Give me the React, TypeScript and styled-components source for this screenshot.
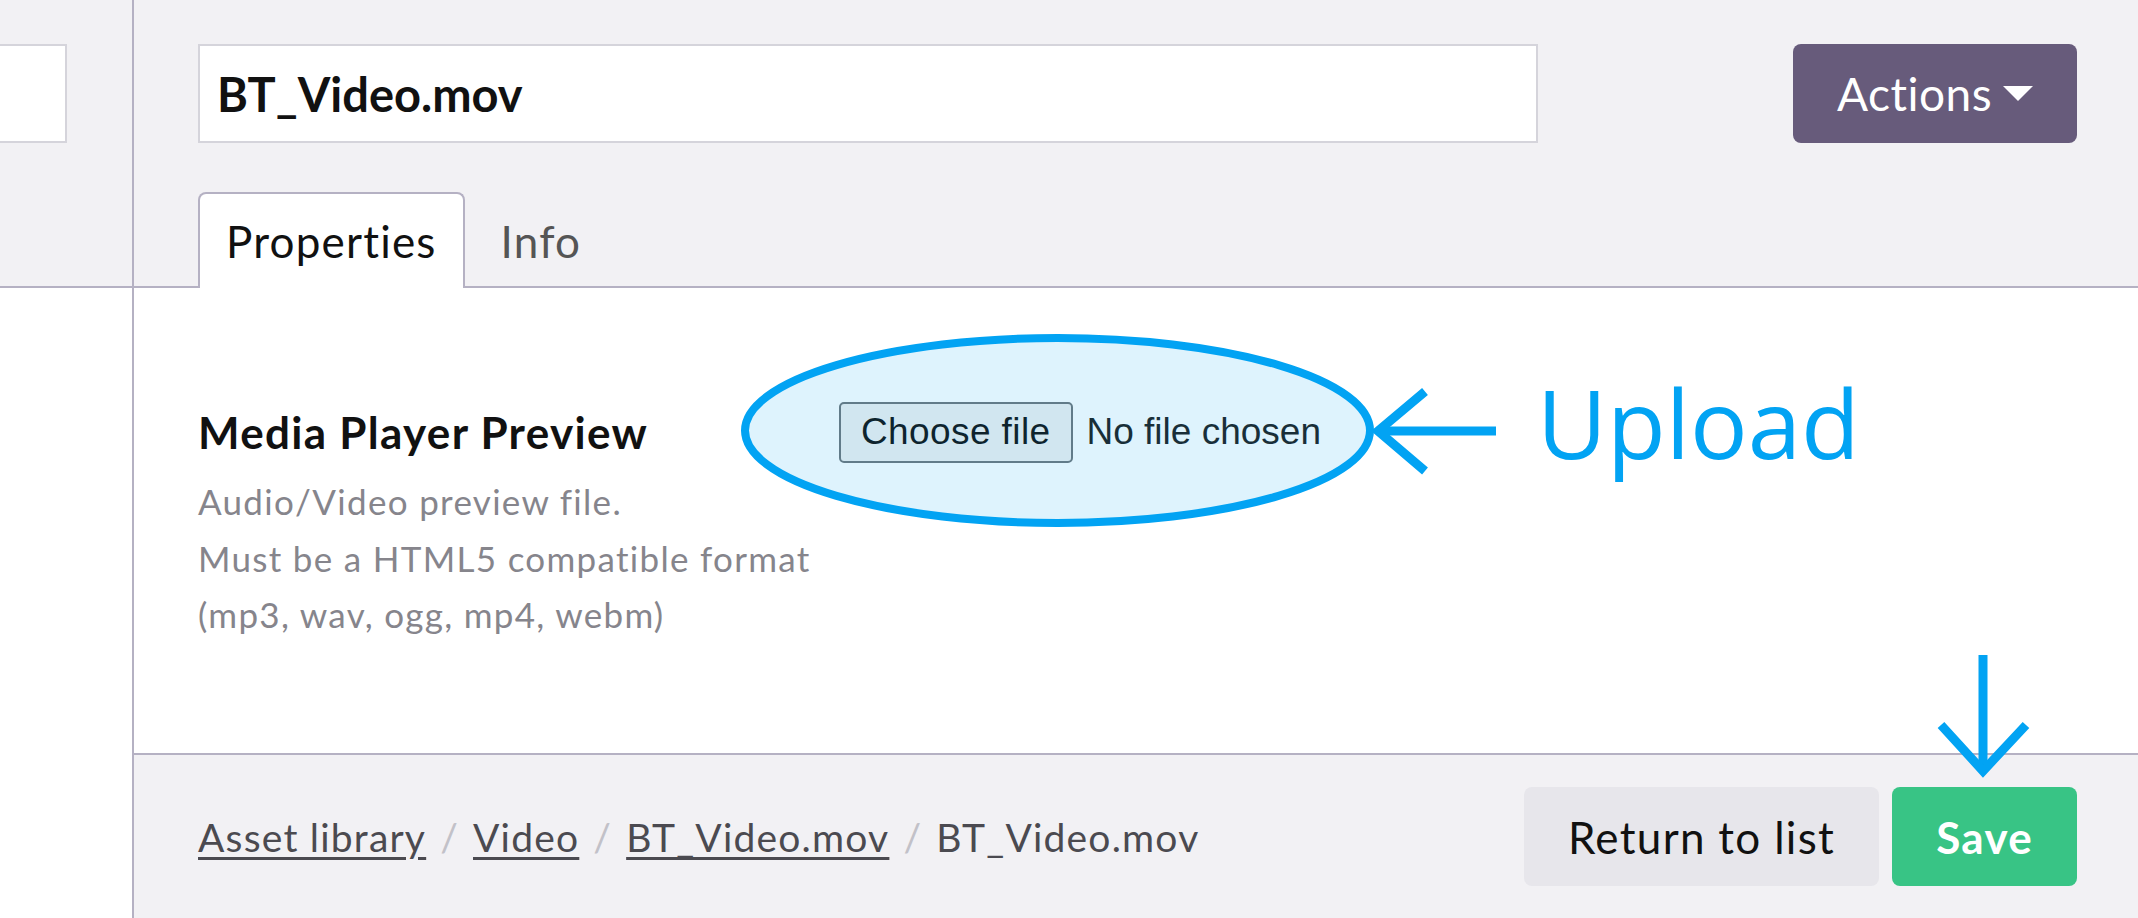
import React from 'react'
import styled, { createGlobalStyle } from 'styled-components'

const GlobalStyle = createGlobalStyle`
  html, body {
    margin: 0;
    padding: 0;
  }
  body {
    background: #f2f1f4;
    font-family: Lato, "Noto Sans", sans-serif;
    color: #111;
  }
  * {
    box-sizing: border-box;
  }
`

const Page = styled.div`
  display: grid;
  grid-template-columns: 134px 1fr;
  height: 918px;
  overflow: hidden;
`

const Sidebar = styled.aside`
  display: flex;
  flex-direction: column;
  border-right: 2px solid #b5b1c3;
`

const SidebarHead = styled.div`
  height: 288px;
  padding-top: 44px;
  background: #f2f1f4;
  border-bottom: 2px solid #b5b1c3;
`

const SearchStub = styled.div`
  width: 67px;
  height: 99px;
  background: #fff;
  border: 2px solid #d5d4db;
  border-left: none;
`

const SidebarBody = styled.div`
  flex: 1;
  background: #fff;
`

const Main = styled.main`
  position: relative;
  display: flex;
  flex-direction: column;
  min-width: 0;
`

const Header = styled.header`
  height: 288px;
  padding: 44px 61px 0 64px;
  background: #f2f1f4;
  border-bottom: 2px solid #b5b1c3;
`

const TopRow = styled.div`
  display: flex;
  justify-content: space-between;
  height: 99px;
`

const TitleInput = styled.input`
  width: 1340px;
  height: 99px;
  padding: 0 17px;
  border: 2px solid #d5d4db;
  background: #fff;
  font-family: Lato, sans-serif;
  font-size: 47px;
  font-weight: 700;
  color: #111;
  outline: none;
`

const ActionsButton = styled.button`
  display: flex;
  align-items: center;
  justify-content: center;
  width: 284px;
  height: 99px;
  border: none;
  border-radius: 8px;
  background: #675b7b;
  color: #fff;
  font-family: Lato, sans-serif;
  font-size: 46px;
  letter-spacing: 0.5px;

  &::after {
    content: '';
    margin-left: 11px;
    border-top: 15px solid #fff;
    border-left: 15px solid transparent;
    border-right: 15px solid transparent;
  }
`

const Tabs = styled.nav`
  display: flex;
  align-items: flex-end;
  margin-top: 49px;
`

const Tab = styled.div<{ $active?: boolean }>`
  display: flex;
  align-items: center;
  height: 96px;
  margin-bottom: -2px;
  padding: 0 26px;
  font-size: 44px;
  letter-spacing: 1.2px;
  color: ${p => (p.$active ? '#111' : '#555')};
  background: ${p => (p.$active ? '#fff' : 'transparent')};
  border: 2px solid ${p => (p.$active ? '#b5b1c3' : 'transparent')};
  border-bottom: none;
  border-radius: 8px 8px 0 0;
  ${p => !p.$active && 'padding-left: 34px;'}
`

const Content = styled.section`
  flex: 1;
  padding: 113px 64px 0;
  background: #fff;
  border-bottom: 2px solid #b5b1c3;
`

const FieldRow = styled.div`
  display: grid;
  grid-template-columns: 641px auto;
  align-items: start;
`

const FieldLabel = styled.div`
  font-size: 44px;
  font-weight: 700;
  line-height: 62px;
  letter-spacing: 1.3px;
  color: #111;
`

const FieldHelp = styled.div`
  margin-top: 10px;
  font-size: 35px;
  line-height: 56.5px;
  letter-spacing: 1.3px;
  color: #86858c;
`

const FileField = styled.div`
  display: flex;
  align-items: center;
  gap: 14px;
  height: 62px;
  font-family: "Liberation Sans", Arial, sans-serif;
  font-size: 37px;
`

const FileButton = styled.button`
  height: 61px;
  padding: 0 20px;
  border: 2px solid #70767a;
  border-radius: 5px;
  background: #f1f1f1;
  font-family: "Liberation Sans", Arial, sans-serif;
  font-size: 37px;
  letter-spacing: 0.4px;
  color: #111;
`

const FileStatus = styled.span`
  color: #1d1d1d;
`

const Footer = styled.footer`
  display: flex;
  align-items: center;
  justify-content: space-between;
  height: 163px;
  padding: 0 61px 0 64px;
  background: #f2f1f4;
`

const Breadcrumb = styled.ol`
  display: flex;
  align-items: center;
  margin: 0;
  padding: 0;
  list-style: none;
  font-size: 39px;
  letter-spacing: 1.2px;
  color: #4b4a50;
`

const Crumb = styled.li`
  & + &::before {
    content: '/';
    padding: 0 14px;
    color: #c2c1c8;
  }
  a {
    color: #4b4a50;
    text-decoration: underline;
    text-underline-offset: 5px;
  }
`

const ButtonBar = styled.div`
  display: flex;
  gap: 13px;
`

const FooterButton = styled.button<{ $primary?: boolean }>`
  height: 99px;
  padding: 0 44px;
  border: none;
  border-radius: 8px;
  font-family: Lato, sans-serif;
  font-size: 44px;
  letter-spacing: 1.3px;
  font-weight: ${p => (p.$primary ? 700 : 400)};
  background: ${p => (p.$primary ? '#38c485' : '#e7e6eb')};
  color: ${p => (p.$primary ? '#fff' : '#111')};
`

// annotation layer drawn over the screenshot
const Mark = styled.svg`
  position: absolute;
  overflow: visible;
  pointer-events: none;
`

const UploadNote = styled.div`
  position: absolute;
  left: 1403px;
  top: 374px;
  font-family: "Open Sans", sans-serif;
  font-size: 96px;
  line-height: 1;
  color: #02a3f3;
`

const BLUE = '#02a3f3'

export default function App() {
  return (
    <>
      <GlobalStyle />
      <Page>
        <Sidebar>
          <SidebarHead>
            <SearchStub />
          </SidebarHead>
          <SidebarBody />
        </Sidebar>

        <Main>
          <Header>
            <TopRow>
              <TitleInput defaultValue="BT_Video.mov" />
              <ActionsButton>Actions</ActionsButton>
            </TopRow>
            <Tabs>
              <Tab $active>Properties</Tab>
              <Tab>Info</Tab>
            </Tabs>
          </Header>

          <Content>
            <FieldRow>
              <div>
                <FieldLabel>Media Player Preview</FieldLabel>
                <FieldHelp>
                  Audio/Video preview file.
                  <br />
                  Must be a HTML5 compatible format
                  <br />
                  (mp3, wav, ogg, mp4, webm)
                </FieldHelp>
              </div>
              <FileField>
                <FileButton>Choose file</FileButton>
                <FileStatus>No file chosen</FileStatus>
              </FileField>
            </FieldRow>
          </Content>

          <Footer>
            <Breadcrumb>
              <Crumb><a>Asset library</a></Crumb>
              <Crumb><a>Video</a></Crumb>
              <Crumb><a>BT_Video.mov</a></Crumb>
              <Crumb>BT_Video.mov</Crumb>
            </Breadcrumb>
            <ButtonBar>
              <FooterButton>Return to list</FooterButton>
              <FooterButton $primary>Save</FooterButton>
            </ButtonBar>
          </Footer>

          <Mark style={{ left: 603, top: 330 }} width={641} height={201}>
            <ellipse cx={320.5} cy={100.5} rx={312.5} ry={92.5} fill="rgba(0,162,240,0.13)" stroke={BLUE} strokeWidth={8} />
          </Mark>
          <Mark style={{ left: 1236, top: 380 }} width={135} height={102}>
            <polyline points="55,11.5 8,51 55,91" fill="none" stroke={BLUE} strokeWidth={9} strokeLinejoin="miter" />
            <line x1={10} y1={51} x2={126} y2={51} stroke={BLUE} strokeWidth={9} />
          </Mark>
          <UploadNote>Upload</UploadNote>
          <Mark style={{ left: 1796, top: 650 }} width={110} height={130}>
            <line x1={53} y1={5} x2={53} y2={120} stroke={BLUE} strokeWidth={9} />
            <polyline points="11,75 53,121 96,75" fill="none" stroke={BLUE} strokeWidth={9} strokeLinejoin="miter" />
          </Mark>
        </Main>
      </Page>
    </>
  )
}
